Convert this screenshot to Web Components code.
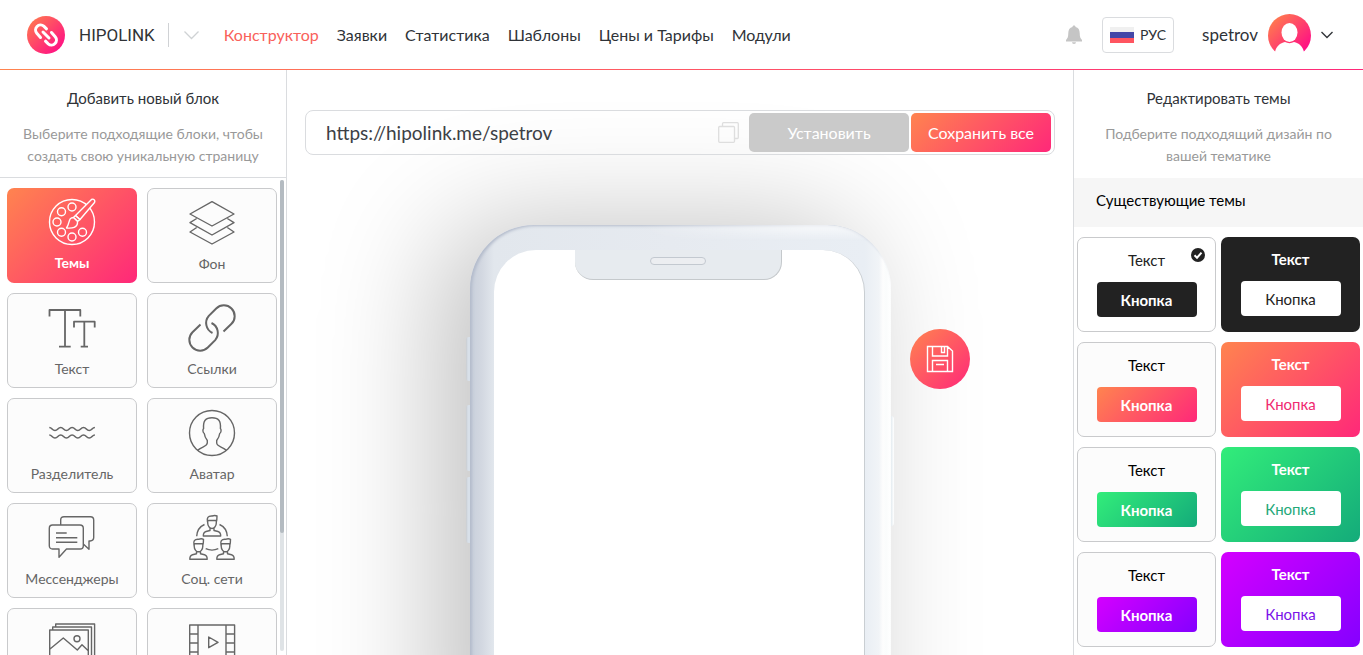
<!DOCTYPE html>
<html lang="ru">
<head>
<meta charset="utf-8">
<meta name="viewport" content="width=device-width, initial-scale=1">
<title>Hipolink</title>
<style>
  html, body { height: 100%; margin: 0; }
  body {
    font-family: Lato, "Open Sans", sans-serif;
    color: #2f3338;
    background: #fff;
    overflow: hidden;
    --brand: linear-gradient(135deg, #ff844f, #ff2879);
    --line: #dadcdf;
  }
</style>
</head>
<body>
<hipo-app></hipo-app>

<script>
const define = (name, html, setup) => {
  const template = document.createElement('template');
  template.innerHTML = '<style>*{box-sizing:border-box}button,input{font:inherit;color:inherit;border:0;margin:0;padding:0;background:none}button{cursor:pointer}svg{display:block}</style>' + html;
  customElements.define(name, class extends HTMLElement {
    constructor() {
      super();
      this.attachShadow({ mode: 'open' }).append(template.content.cloneNode(true));
    }
    connectedCallback() { if (setup) setup(this, this.shadowRoot); }
  });
};

const PERSON = '<path d="M19.500 8C18.500 4 20 1.700 24 2C26 1.300 28 1.500 29 2C29 4.500 29 6 28.300 8M19.500 6.500H28.500M19.700 7V9C19.700 12.500 22 14.500 24 14.500S28.300 12.500 28.300 9V7M22 14V16.500L18 17.500C16 18 15.300 19.500 15.300 22H32.700C32.700 19.500 32 18 30 17.500L26 16.500V14"/>';

const ICONS = {
  themes: '<circle cx="24" cy="24" r="22.5"/><circle cx="24" cy="9" r="4"/><circle cx="13.5" cy="13.7" r="4"/><circle cx="9" cy="24" r="4"/><circle cx="13.5" cy="34.3" r="4"/><circle cx="24" cy="39" r="4"/><circle cx="34.5" cy="34.3" r="4"/><path class="fill" d="M43.5 1.5C45.500 .5 47.500 2 46.500 4.500L32 21.500L27.500 17.500Z"/><path d="M27.500 17.500L32 21.500L29.500 23.500L25.500 19.500Z"/><path class="fill" d="M25.500 19.500C20 19.500 22 25.500 18.500 30C24 30.500 30 30 29.500 23.500Z"/>',
  background: '<path d="M24 2.700L46 15L24 27L2 15Z"/><path d="M8.700 19.500L2 23.700L24 36L46 23.700L39.300 19.500"/><path d="M8.700 28.500L2 33L24 45L46 33L39.300 28.500"/>',
  text: '<path stroke-width="1.800" d="M1.500 12.500V6H32.300V12.500M17 6V42.700M11 42.700H22.700M26 23.500V17.700H46.700V23.500M36.300 17.700V42.700M32.700 42.700H40"/>',
  links: '<path stroke-width="2" d="M35.500 27.500L43.500 19.800A10.800 10.800 0 0 0 28.200 4.500L20.800 11.900A11 11 0 0 0 24.500 29M12.500 20.500L4.500 28.200A10.800 10.800 0 0 0 19.800 43.500L27.200 36.100A11 11 0 0 0 23.500 19"/>',
  divider: '<path stroke-width="1.600" d="M1.300 18.500c2.800 0 2.800 3 5.700 3s2.800-3 5.700-3s2.800 3 5.700 3s2.800-3 5.700-3s2.800 3 5.700 3s2.800-3 5.700-3s2.800 3 5.700 3s2.800-3 5.700-3M1.300 26c2.800 0 2.800 3 5.700 3s2.800-3 5.700-3s2.800 3 5.700 3s2.800-3 5.700-3s2.800 3 5.700 3s2.800-3 5.700-3s2.800 3 5.700 3s2.800-3 5.700-3"/>',
  avatar: '<circle cx="24" cy="24" r="22.500"/><path d="M9.500 41.500C13 37.500 19 38 19.300 34V31.500C17 28.500 16.500 26.500 16.300 24.500C14.600 23.500 14.600 20.500 15.600 19.500C15 12 17.500 8.700 24 8.700S33 12 32.400 19.500C33.400 20.500 33.400 23.500 31.700 24.500C31.500 26.500 31 28.500 28.700 31.500V34C29 38 35 37.500 38.500 41.500"/>',
  chat: '<path d="M4.500 11H32C34.200 11 35.300 12.300 35.300 14.300V31.700C35.300 33.700 34.200 35 32 35H18.500L11 43.300V35H4.500C2.400 35 1.300 33.700 1.300 31.700V14.300C1.300 12.300 2.400 11 4.500 11Z"/><path d="M12.700 11V6C12.700 3.800 13.800 2.700 16 2.700H42.500C44.600 2.700 45.700 3.800 45.700 6V23.500C45.700 25.700 44.600 26.700 42 27H41V35.300L35.300 30M8 19H18.700M8 23.700H29.300M8 28.300H29.300"/>',
  social: PERSON + '<g transform="translate(-13.500 23.300)">' + PERSON + '</g><g transform="translate(13.500 23.300)">' + PERSON + '</g><path d="M8.700 22.300C9 17 12 12.500 16.500 10.500M39.300 22.300C39 17 36 12.500 31.500 10.500M17.700 34.700Q24 37.500 30.300 34.700"/>',
  gallery: '<path d="M1.700 46V11H40.300V46M4.700 11V8H43.500V46M7.700 8V5H46.600V46M2 30L15.300 19L29.300 31L34 25.700L40 31.500"/><circle cx="29" cy="19.700" r="3"/>',
  video: '<path d="M1.700 46V6H46.600V46M10 6V46M38 6V46M1.700 15H10M1.700 24H10M1.700 33H10M38 15H46.600M38 24H46.600M38 33H46.600M20.700 18L30 23.300L20.700 28.700Z"/>'
};

define('hipo-logo', `
<style>
  :host { display: block; }
  a { display: flex; align-items: center; gap: 14px; color: #303336; text-decoration: none; font: 17px/24px Roboto, sans-serif; }
</style>
<a href="#"><svg width="38" height="38" viewBox="0 0 38 38" aria-hidden="true">
  <defs><linearGradient id="g" x1="0" y1="0" x2="1" y2="1"><stop offset=".1" stop-color="#ff7551"/><stop offset=".9" stop-color="#ff0f85"/></linearGradient></defs>
  <circle cx="19" cy="19" r="19" fill="url(#g)"/>
  <g fill="none" stroke="#fff" stroke-width="3" stroke-linecap="round">
    <path d="M13.500 21.500L9.800 17.300A5 5 0 0 1 16.800 10.200L19.500 12.800"/>
    <path d="M24.500 16.500L28.200 20.700A5 5 0 0 1 21.200 27.800L18.500 25.200"/>
    <path d="M16 16L22 22"/>
  </g>
</svg><span>HIPOLINK</span></a>`);

define('hipo-header', `
<style>
  :host { display: flex; align-items: center; height: 70px; padding: 0 30px 0 27px; background: linear-gradient(90deg, #ff844f, #ff2879) bottom / 100% 1px no-repeat; }
  .more { margin: 0 25px 0 13px; padding-left: 15px; height: 24px; border-left: 1px solid #d0d2d5; }
  nav { display: flex; gap: 18px; flex: 1; white-space: nowrap; }
  nav a { font-size: 16px; line-height: 24px; color: #2f3338; text-decoration: none; }
  nav a[aria-current] { color: #f9615a; }
  .lang { display: flex; align-items: center; gap: 6px; height: 36px; margin: 0 28px 0 20px; padding: 0 7px; border: 1px solid #dadcdf; border-radius: 4px; font-size: 14px; line-height: 20px; }
  .user { display: flex; align-items: center; gap: 10px; font-size: 17px; line-height: 24px; }
</style>
<hipo-logo></hipo-logo>
<button class="more" aria-label="Ещё"><svg width="15" height="10" viewBox="0 0 15 10" fill="none" stroke="#cfd2d4" stroke-width="1.300"><path d="M.5 1.500L7.500 8.500L14.500 1.500"/></svg></button>
<nav>
  <a href="#" aria-current="page">Конструктор</a><a href="#">Заявки</a><a href="#">Статистика</a><a href="#">Шаблоны</a><a href="#">Цены и Тарифы</a><a href="#">Модули</a>
</nav>
<button aria-label="Уведомления"><svg width="16" height="20" viewBox="0 0 16 20" fill="#c5c5c5"><path d="M8 .5C7 .5 6.500 1 6.500 2C3.600 2.600 2.300 5 2.300 8C2.300 12 1.500 13.500 0 15V16.500H16V15C14.500 13.500 13.700 12 13.700 8C13.700 5 12.400 2.600 9.500 2C9.500 1 9 .5 8 .5ZM6 17.200A2 1.800 0 0 0 10 17.200Z"/></svg></button>
<button class="lang"><svg width="24" height="16" viewBox="0 0 24 16"><path fill="#f0f0f0" d="M0 0H24V5H0z"/><path fill="#4347a8" d="M0 5H24V11H0z"/><path fill="#ff5560" d="M0 11H24V16H0z"/></svg><span>РУС</span></button>
<button class="user"><span>spetrov</span>
  <svg width="43" height="43" viewBox="0 0 43 43"><defs><linearGradient id="u" x1="0" y1="0" x2="1" y2="1"><stop offset=".15" stop-color="#ff7551"/><stop offset=".85" stop-color="#ff0f85"/></linearGradient></defs><circle cx="21.500" cy="21.500" r="21.500" fill="url(#u)"/><path fill="#fff" d="M7 38C8.500 31.500 12 29.500 17 28C19.500 29.500 23.500 29.500 26 28C31 29.500 34.500 31.500 36 38L38 43H5Z"/><ellipse cx="21.500" cy="18.500" rx="8" ry="9.500" fill="#fff"/></svg>
  <svg width="12" height="8" viewBox="0 0 12 8" fill="none" stroke="#33363a" stroke-width="1.400"><path d="M.5 1L6 6.500L11.500 1"/></svg>
</button>`);

define('block-tile', `
<style>
  :host { display: block; }
  button { display: flex; flex-direction: column; align-items: center; gap: 7px; width: 100%; height: 95px; padding-top: 10px; border: 1px solid #c9cacc; border-radius: 7px; background: #fcfcfc; color: #666; font-size: 14px; line-height: 20px; }
  svg { width: 48px; height: 48px; flex: none; fill: none; stroke: #666; stroke-width: 1.400; stroke-linejoin: round; }
  :host([selected]) button { border: 0; background: var(--brand); color: #fff; font-weight: 700; }
  :host([selected]) svg { stroke: #fff; }
  .fill { fill: #ff5b62; }
</style>
<button><svg viewBox="0 0 48 48" aria-hidden="true"></svg><span><slot></slot></span></button>`,
(host, root) => { root.querySelector('svg').innerHTML = ICONS[host.getAttribute('icon')]; });

define('panel-head', `
<style>
  :host { display: block; height: 108px; padding: 17px 20px 0; text-align: center; }
  h2 { margin: 0 0 14px; font-size: 15px; line-height: 22px; font-weight: 400; }
  p { margin: 0; font-size: 14px; line-height: 22px; color: #999; }
</style>
<h2><slot name="title"></slot></h2><p><slot></slot></p>`);

define('blocks-panel', `
<style>
  :host { display: flex; flex-direction: column; width: 287px; border-right: 1px solid var(--line); min-height: 0; }
  panel-head { border-bottom: 1px solid var(--line); flex: none; }
  .body { display: flex; gap: 3px; flex: 1; min-height: 0; padding: 0 2px 4px 7px; }
  .list { flex: 1; display: grid; grid-template-columns: 1fr 1fr; gap: 10px; align-content: start; padding: 10px 0; overflow-y: auto; scrollbar-width: none; margin-bottom: -4px; }
  .track { width: 4px; margin-top: 2px; border-radius: 2px; background: #dfe3e6; }
  .track i { display: block; height: 75%; border-radius: 2px; background: #b4bbc1; }
</style>
<panel-head><span slot="title">Добавить новый блок</span>Выберите подходящие блоки, чтобы<br>создать свою уникальную страницу</panel-head>
<div class="body">
  <div class="list">
    <block-tile icon="themes" selected>Темы</block-tile><block-tile icon="background">Фон</block-tile>
    <block-tile icon="text">Текст</block-tile><block-tile icon="links">Ссылки</block-tile>
    <block-tile icon="divider">Разделитель</block-tile><block-tile icon="avatar">Аватар</block-tile>
    <block-tile icon="chat">Мессенджеры</block-tile><block-tile icon="social">Соц. сети</block-tile>
    <block-tile icon="gallery"></block-tile><block-tile icon="video"></block-tile>
  </div>
  <div class="track"><i></i></div>
</div>`);

define('url-bar', `
<style>
  :host { display: flex; align-items: center; gap: 2px; height: 45px; padding: 0 3px 0 20px; border: 1px solid var(--line); border-radius: 8px; }
  input { flex: 1; min-width: 0; height: 39px; outline: 0; font-size: 19px; line-height: 24px; color: #3c4045; }
  .copy { margin-right: 8px; }
  .act { width: 160px; height: 39px; border-radius: 5px; background: #cacaca; color: #fff; font-size: 16px; line-height: 24px; white-space: nowrap; }
  .save { width: 140px; background: var(--brand); }
</style>
<input type="text" aria-label="Адрес страницы" value="https://hipolink.me/spetrov">
<button class="copy" aria-label="Скопировать"><svg width="21" height="21" viewBox="0 0 21 21" fill="none" stroke="#dedede" stroke-width="1.300"><rect x=".7" y="4.500" width="15.800" height="15.800" rx="1"/><path d="M4.500 4V1.700Q4.500 .7 5.500 .7H19.300Q20.300 .7 20.300 1.700V15.500Q20.300 16.500 19.300 16.500H17"/></svg></button>
<button class="act">Установить</button>
<button class="act save">Сохранить все</button>`);

define('phone-preview', `
<style>
  :host { display: block; position: relative; width: 421px; height: 850px; flex: none; }
  .body { position: relative; height: 100%; padding: 25px 26px 25px 24px; border-radius: 64px;
    background: linear-gradient(90deg, #c8cfdb 0, #d3d8e1 12px, #e2e7ed 24px, #e6eaf0 200px, #e9eef4 395px, #f1f4f7 409px, #fdfdfd 413px, #fafcfc 416px, #fff 421px);
    box-shadow: -31px 0 118px rgba(0,0,0,.25), inset 2px 1px 3px #b3bbcb; }
  .body::before { content: ""; position: absolute; inset: 0; border-radius: inherit; background: linear-gradient(180deg, rgba(255,255,255,.7), rgba(255,255,255,0) 16px); mask: linear-gradient(90deg, transparent 40%, #000 80%); }
  .screen { position: relative; height: 100%; border-radius: 42px; background: #fff; border-right: 1px solid #c9ced2; display: flex; justify-content: center; align-items: flex-start; }
  .notch { width: 207px; height: 30px; border: solid #c5c9cc; border-width: 0 1px 1px 0; border-radius: 0 0 18px 18px; background: #e7ebef; display: flex; justify-content: center; padding-top: 7px; }
  .notch i { width: 56px; height: 8px; border: 1px solid #c3c9d0; border-radius: 4px; background: #eceef1; }
  .key { position: absolute; z-index: 1; left: -4px; width: 4px; height: 66px; background: linear-gradient(90deg, #c9ccd0, #d8e0e9 2px); border-radius: 3px 0 0 3px; }
  .mute { top: 112px; height: 44px; }
  .up { top: 180px; }
  .down { top: 252px; }
  .power { left: auto; right: -3px; top: 191px; width: 3px; height: 110px; background: linear-gradient(90deg, #e3ebf0, #fff); border-radius: 0 3px 3px 0; }
</style>
<span class="key mute"></span><span class="key up"></span><span class="key down"></span><span class="key power"></span>
<div class="body"><div class="screen"><div class="notch"><i></i></div></div></div>`);

define('page-canvas', `
<style>
  :host { display: flex; flex-direction: column; gap: 70px; flex: 1; min-width: 0; padding: 40px 18px 0; overflow: hidden; }
  url-bar { flex: none; position: relative; z-index: 1; }
  .stage { position: relative; align-self: center; flex: none; }
  .save { position: absolute; top: 104px; left: calc(100% + 19px); width: 60px; height: 60px; border-radius: 50%; background: var(--brand); display: grid; place-items: center; }
</style>
<url-bar></url-bar>
<div class="stage">
  <phone-preview></phone-preview>
  <button class="save" aria-label="Сохранить"><svg width="28" height="28" viewBox="0 0 28 28" fill="none" stroke="#fff" stroke-width="1.400"><path d="M1.500 1.500H21.500L26.500 6V26.500H1.500ZM6.500 1.500V11H21.500V1.500M15.500 1.500V7.500H18.500V1.500M6.500 26.500V15.500H21.500V26.500M10 19.500H18"/></svg></button>
</div>`);

define('theme-card', `
<style>
  :host { display: block; }
  button { position: relative; display: flex; flex-direction: column; align-items: center; gap: 11px; width: 100%; height: 95px; padding-top: 11px; border: 1px solid #c9cacc; border-radius: 7px; background: #fcfcfc; color: #000; font-size: 15px; line-height: 22px; }
  .pill { width: 100px; height: 35px; line-height: 36px; border-radius: 4px; background: var(--paint); color: #fff; font-weight: 700; }
  :host([solid]) button { border: 0; background: var(--paint); color: #fff; font-weight: 700; }
  :host([solid]) .pill { background: #fff; color: var(--ink); font-weight: 400; }
  :host([checked]) button { background: #fff; color: #222; }
  svg { display: none; position: absolute; top: 10px; right: 10px; }
  :host([checked]) svg { display: block; }
</style>
<button><span>Текст</span><span class="pill">Кнопка</span><svg width="14" height="14" viewBox="0 0 14 14"><circle cx="7" cy="7" r="7" fill="#222"/><path d="M3.500 7.300L6 9.700L10.500 4.700" fill="none" stroke="#fff" stroke-width="2"/></svg></button>`);

define('themes-panel', `
<style>
  :host { display: flex; flex-direction: column; width: 290px; border-left: 1px solid var(--line); min-height: 0; }
  h3 { flex: none; margin: 0; height: 49px; padding: 0 22px; background: #f6f6f6; color: #000; font-size: 15px; line-height: 45px; font-weight: 400; }
  panel-head { flex: none; }
  .list { display: grid; grid-template-columns: 1fr 1fr; gap: 10px 5px; padding: 10px 3px; overflow-y: auto; scrollbar-width: none; }
  .dark { --paint: #222; --ink: #222; }
  .warm { --paint: var(--brand); --ink: #f02a70; }
  .green { --paint: linear-gradient(135deg, #32ed7a, #14ab7a); --ink: #22a878; }
  .violet { --paint: linear-gradient(135deg, #d400ff, #8500ff); --ink: #7a12e8; }
</style>
<panel-head><span slot="title">Редактировать темы</span>Подберите подходящий дизайн по<br>вашей тематике</panel-head>
<h3>Существующие темы</h3>
<div class="list">
  <theme-card class="dark" checked></theme-card><theme-card class="dark" solid></theme-card>
  <theme-card class="warm"></theme-card><theme-card class="warm" solid></theme-card>
  <theme-card class="green"></theme-card><theme-card class="green" solid></theme-card>
  <theme-card class="violet"></theme-card><theme-card class="violet" solid></theme-card>
</div>`);

define('hipo-app', `
<style>
  :host { display: flex; flex-direction: column; height: 100vh; }
  hipo-header, blocks-panel, themes-panel { flex: none; }
  main { display: flex; flex: 1; min-height: 0; }
</style>
<hipo-header></hipo-header>
<main><blocks-panel></blocks-panel><page-canvas></page-canvas><themes-panel></themes-panel></main>`);
</script>
</body>
</html>
